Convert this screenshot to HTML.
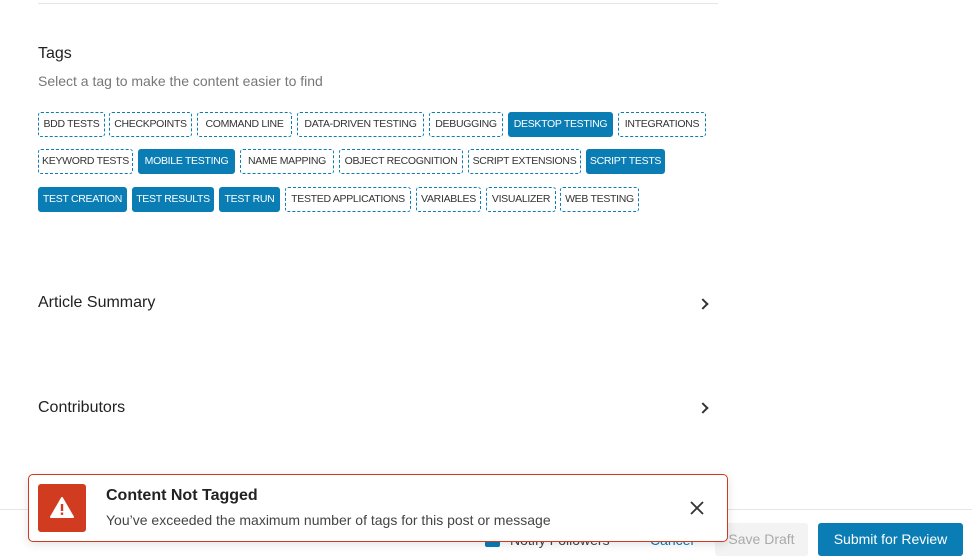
<!DOCTYPE html>
<html><head><style>
*{box-sizing:border-box;margin:0;padding:0}
body{width:972px;height:558px;background:#fff;font-family:"Liberation Sans",sans-serif;position:relative;overflow:hidden;color:#222}
.a{position:absolute}
.tag{position:absolute;height:25px;border:1px dashed #0a7db5;border-radius:3px;font-size:10.5px;line-height:23px;text-align:center;color:#333;white-space:nowrap;letter-spacing:-0.3px;overflow:hidden}
.on{background:#0a7db5;color:#fff;border:1px solid #0a7db5}
.chev{position:absolute;width:8px;height:8px;border-right:2px solid #333;border-top:2px solid #333;transform:rotate(45deg)}
</style></head><body>
<div class="a" style="left:38px;top:3px;width:680px;height:1px;background:#e6e6e6"></div>
<div class="a" style="left:38px;top:45px;font-size:16px;color:#222">Tags</div>
<div class="a" style="left:38px;top:73px;font-size:14px;color:#777">Select a tag to make the content easier to find</div>

<div class="tag" style="left:38px;top:112px;width:67px">BDD TESTS</div>
<div class="tag" style="left:109px;top:112px;width:83px">CHECKPOINTS</div>
<div class="tag" style="left:197px;top:112px;width:95px">COMMAND LINE</div>
<div class="tag" style="left:297px;top:112px;width:127px">DATA-DRIVEN TESTING</div>
<div class="tag" style="left:429px;top:112px;width:74px">DEBUGGING</div>
<div class="tag on" style="left:508px;top:112px;width:105px">DESKTOP TESTING</div>
<div class="tag" style="left:618px;top:112px;width:88px">INTEGRATIONS</div>

<div class="tag" style="left:38px;top:149px;width:95px">KEYWORD TESTS</div>
<div class="tag on" style="left:138px;top:149px;width:97px">MOBILE TESTING</div>
<div class="tag" style="left:240px;top:149px;width:94px">NAME MAPPING</div>
<div class="tag" style="left:339px;top:149px;width:124px">OBJECT RECOGNITION</div>
<div class="tag" style="left:468px;top:149px;width:113px">SCRIPT EXTENSIONS</div>
<div class="tag on" style="left:586px;top:149px;width:79px">SCRIPT TESTS</div>

<div class="tag on" style="left:38px;top:187px;width:89px">TEST CREATION</div>
<div class="tag on" style="left:132px;top:187px;width:82px">TEST RESULTS</div>
<div class="tag on" style="left:219px;top:187px;width:61px">TEST RUN</div>
<div class="tag" style="left:285px;top:187px;width:126px">TESTED APPLICATIONS</div>
<div class="tag" style="left:416px;top:187px;width:65px">VARIABLES</div>
<div class="tag" style="left:486px;top:187px;width:70px">VISUALIZER</div>
<div class="tag" style="left:560px;top:187px;width:79px">WEB TESTING</div>

<div class="a" style="left:38px;top:294px;font-size:16px">Article Summary</div>
<div class="chev" style="left:699px;top:300px"></div>
<div class="a" style="left:38px;top:399px;font-size:16px">Contributors</div>
<div class="chev" style="left:699px;top:404px"></div>

<div class="a" style="left:0;top:509px;width:972px;height:1px;background:#e6e6e6"></div>
<div class="a" style="left:485px;top:532px;width:15px;height:15px;background:#0a7db5;border-radius:2px"></div>
<div class="a" style="left:510px;top:532px;font-size:14px;color:#444">Notify Followers</div>
<div class="a" style="left:650px;top:532px;font-size:14px;color:#0a7db5">Cancel</div>
<div class="a" style="left:715px;top:523px;width:93px;height:33px;background:#f3f3f3;border-radius:3px;font-size:14px;color:#aaa;text-align:center;line-height:33px">Save Draft</div>
<div class="a" style="left:818px;top:523px;width:145px;height:33px;background:#0a7db5;border-radius:3px;font-size:14px;color:#fff;text-align:center;line-height:33px">Submit for Review</div>

<div class="a" style="left:28px;top:474px;width:700px;height:68px;background:#fff;border:1px solid #d0391f;border-radius:5px;box-shadow:0 2px 10px rgba(0,0,0,.12)"></div>
<div class="a" style="left:38px;top:484px;width:48px;height:48px;background:#d13c20;border-radius:3px">
<svg width="48" height="48" viewBox="0 0 48 48"><path d="M24 14 L35 33 L13 33 Z" fill="#fff" stroke="#fff" stroke-width="2" stroke-linejoin="round"/><rect x="22.8" y="20" width="2.4" height="7" fill="#d13c20"/><rect x="22.8" y="28.5" width="2.4" height="2.4" fill="#d13c20"/></svg></div>
<div class="a" style="left:106px;top:487px;font-size:16px;font-weight:bold;color:#222">Content Not Tagged</div>
<div class="a" style="left:106px;top:512px;font-size:14px;color:#444">You’ve exceeded the maximum number of tags for this post or message</div>
<svg class="a" style="left:690px;top:501px" width="14" height="14" viewBox="0 0 14 14"><path d="M1 1L13 13M13 1L1 13" stroke="#333" stroke-width="1.8"/></svg>
</body></html>
